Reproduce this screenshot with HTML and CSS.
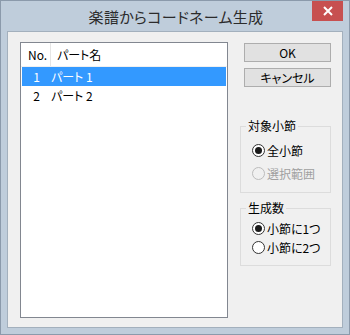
FILE: index.html
```html
<!DOCTYPE html>
<html lang="ja">
  <head>
    <meta charset="utf-8" />
    <title>楽譜からコードネーム生成</title>
    <link rel="stylesheet" href="styles.css">
  </head>
  <body>
    <div class="window">
      <div class="titlebar">
        <span class="title">楽譜からコードネーム生成</span>
        <button class="close" aria-label="閉じる">
          <svg width="10" height="10" viewBox="0 0 10 10">
            <path d="M1 1 L9 9 M9 1 L1 9" stroke="#fff" stroke-width="2" />
          </svg>
        </button>
      </div>
      <div class="client">
        <div class="listview">
          <div class="list-header">
            <div class="col-no">No.</div>
            <div class="col-name">パート名</div>
          </div>
          <div class="list-row selected">
            <div class="cell-no">1</div>
            <div class="cell-name">パート 1</div>
          </div>
          <div class="list-row">
            <div class="cell-no">2</div>
            <div class="cell-name">パート 2</div>
          </div>
        </div>
        <div class="side">
          <button class="push ok">OK</button>
          <button class="push">キャンセル</button>
          <div class="group first">
            <span class="group-label">対象小節</span>
            <label class="radio"><input type="radio" name="target" checked />全小節</label>
            <label class="radio disabled"><input type="radio" name="target" disabled />選択範囲</label>
          </div>
          <div class="group second">
            <span class="group-label">生成数</span>
            <label class="radio"><input type="radio" name="count" checked />小節に1つ</label>
            <label class="radio"><input type="radio" name="count" />小節に2つ</label>
          </div>
        </div>
      </div>
    </div>
  </body>
</html>
```

FILE: styles.css
```css
* {
  margin: 0;
  padding: 0;
  box-sizing: border-box;
  font-family: "Noto Sans CJK JP", "Noto Sans", sans-serif;
  font-feature-settings: "palt";
}
body {
  background-color: #ffffff;
}
.window {
  width: 350px;
  height: 335px;
  border: 1px solid #8b9aab;
  background-color: #bfcddb;
  padding: 0 6px 6px 6px;
  display: flex;
  flex-direction: column;
  position: relative;
}
.titlebar {
  height: 30px;
  display: flex;
  align-items: center;
  justify-content: center;
}
.title {
  font-size: 15px;
  color: #2b2b2b;
  letter-spacing: 0.3px;
  margin-left: 2px;
}
.close {
  position: absolute;
  top: 0;
  right: 6px;
  width: 31px;
  height: 20px;
  border: none;
  background-color: #c75050;
  display: flex;
  align-items: center;
  justify-content: center;
}
.client {
  flex: 1;
  border: 1px solid #a3b0bd;
  background-color: #f0f0f0;
  display: flex;
  padding: 10px 11px 9px 12px;
  gap: 12px;
}
.listview {
  width: 208px;
  border: 1px solid #828790;
  background-color: #ffffff;
  font-size: 12px;
  color: #000000;
}
.list-header {
  display: flex;
  height: 24px;
  border-bottom: 1px solid #f0f0f0;
  line-height: 23px;
}
.col-no {
  width: 30px;
  padding-left: 7px;
  border-right: 1px solid #e5e5e5;
}
.col-name {
  padding-left: 6px;
}
.list-row {
  display: flex;
  height: 19px;
  line-height: 19px;
  margin: 0 1px;
}
.list-row.selected {
  background-color: #3399ff;
  color: #ffffff;
}
.cell-no {
  width: 18px;
  text-align: right;
}
.cell-name {
  padding-left: 11px;
}
.side {
  width: 91px;
  display: flex;
  flex-direction: column;
  align-items: flex-end;
}
.push {
  width: 87px;
  height: 19px;
  border: 1px solid #adadad;
  background-color: #e1e1e1;
  font-size: 12px;
  line-height: 17px;
  color: #000000;
}
.push.ok {
  margin-top: 1px;
  margin-bottom: 6px;
}
.group {
  position: relative;
  width: 91px;
  border: 1px solid #dcdcdc;
  padding-left: 11px;
  display: flex;
  flex-direction: column;
}
.group.first {
  margin-top: 39px;
  height: 67px;
  padding-top: 17px;
  gap: 10px;
}
.group.second {
  margin-top: 15px;
  height: 58px;
  padding-top: 13px;
  gap: 6px;
}
.group-label {
  position: absolute;
  top: -9px;
  left: 5px;
  padding: 0 2px;
  background-color: #f0f0f0;
  font-size: 12px;
  line-height: 16px;
  color: #000000;
}
.radio {
  display: flex;
  align-items: center;
  gap: 2px;
  font-size: 12px;
  color: #000000;
  height: 13px;
}
.radio.disabled {
  color: #a0a0a0;
}
.radio input {
  appearance: none;
  flex: none;
  width: 13px;
  height: 13px;
  border: 1px solid #333333;
  border-radius: 50%;
  background-color: #ffffff;
  display: flex;
  align-items: center;
  justify-content: center;
}
.radio input:checked::after {
  content: "";
  width: 7px;
  height: 7px;
  border-radius: 50%;
  background-color: #1a1a1a;
}
.radio input:disabled {
  border-color: #bcbcbc;
  background-color: #f0f0f0;
}
```
